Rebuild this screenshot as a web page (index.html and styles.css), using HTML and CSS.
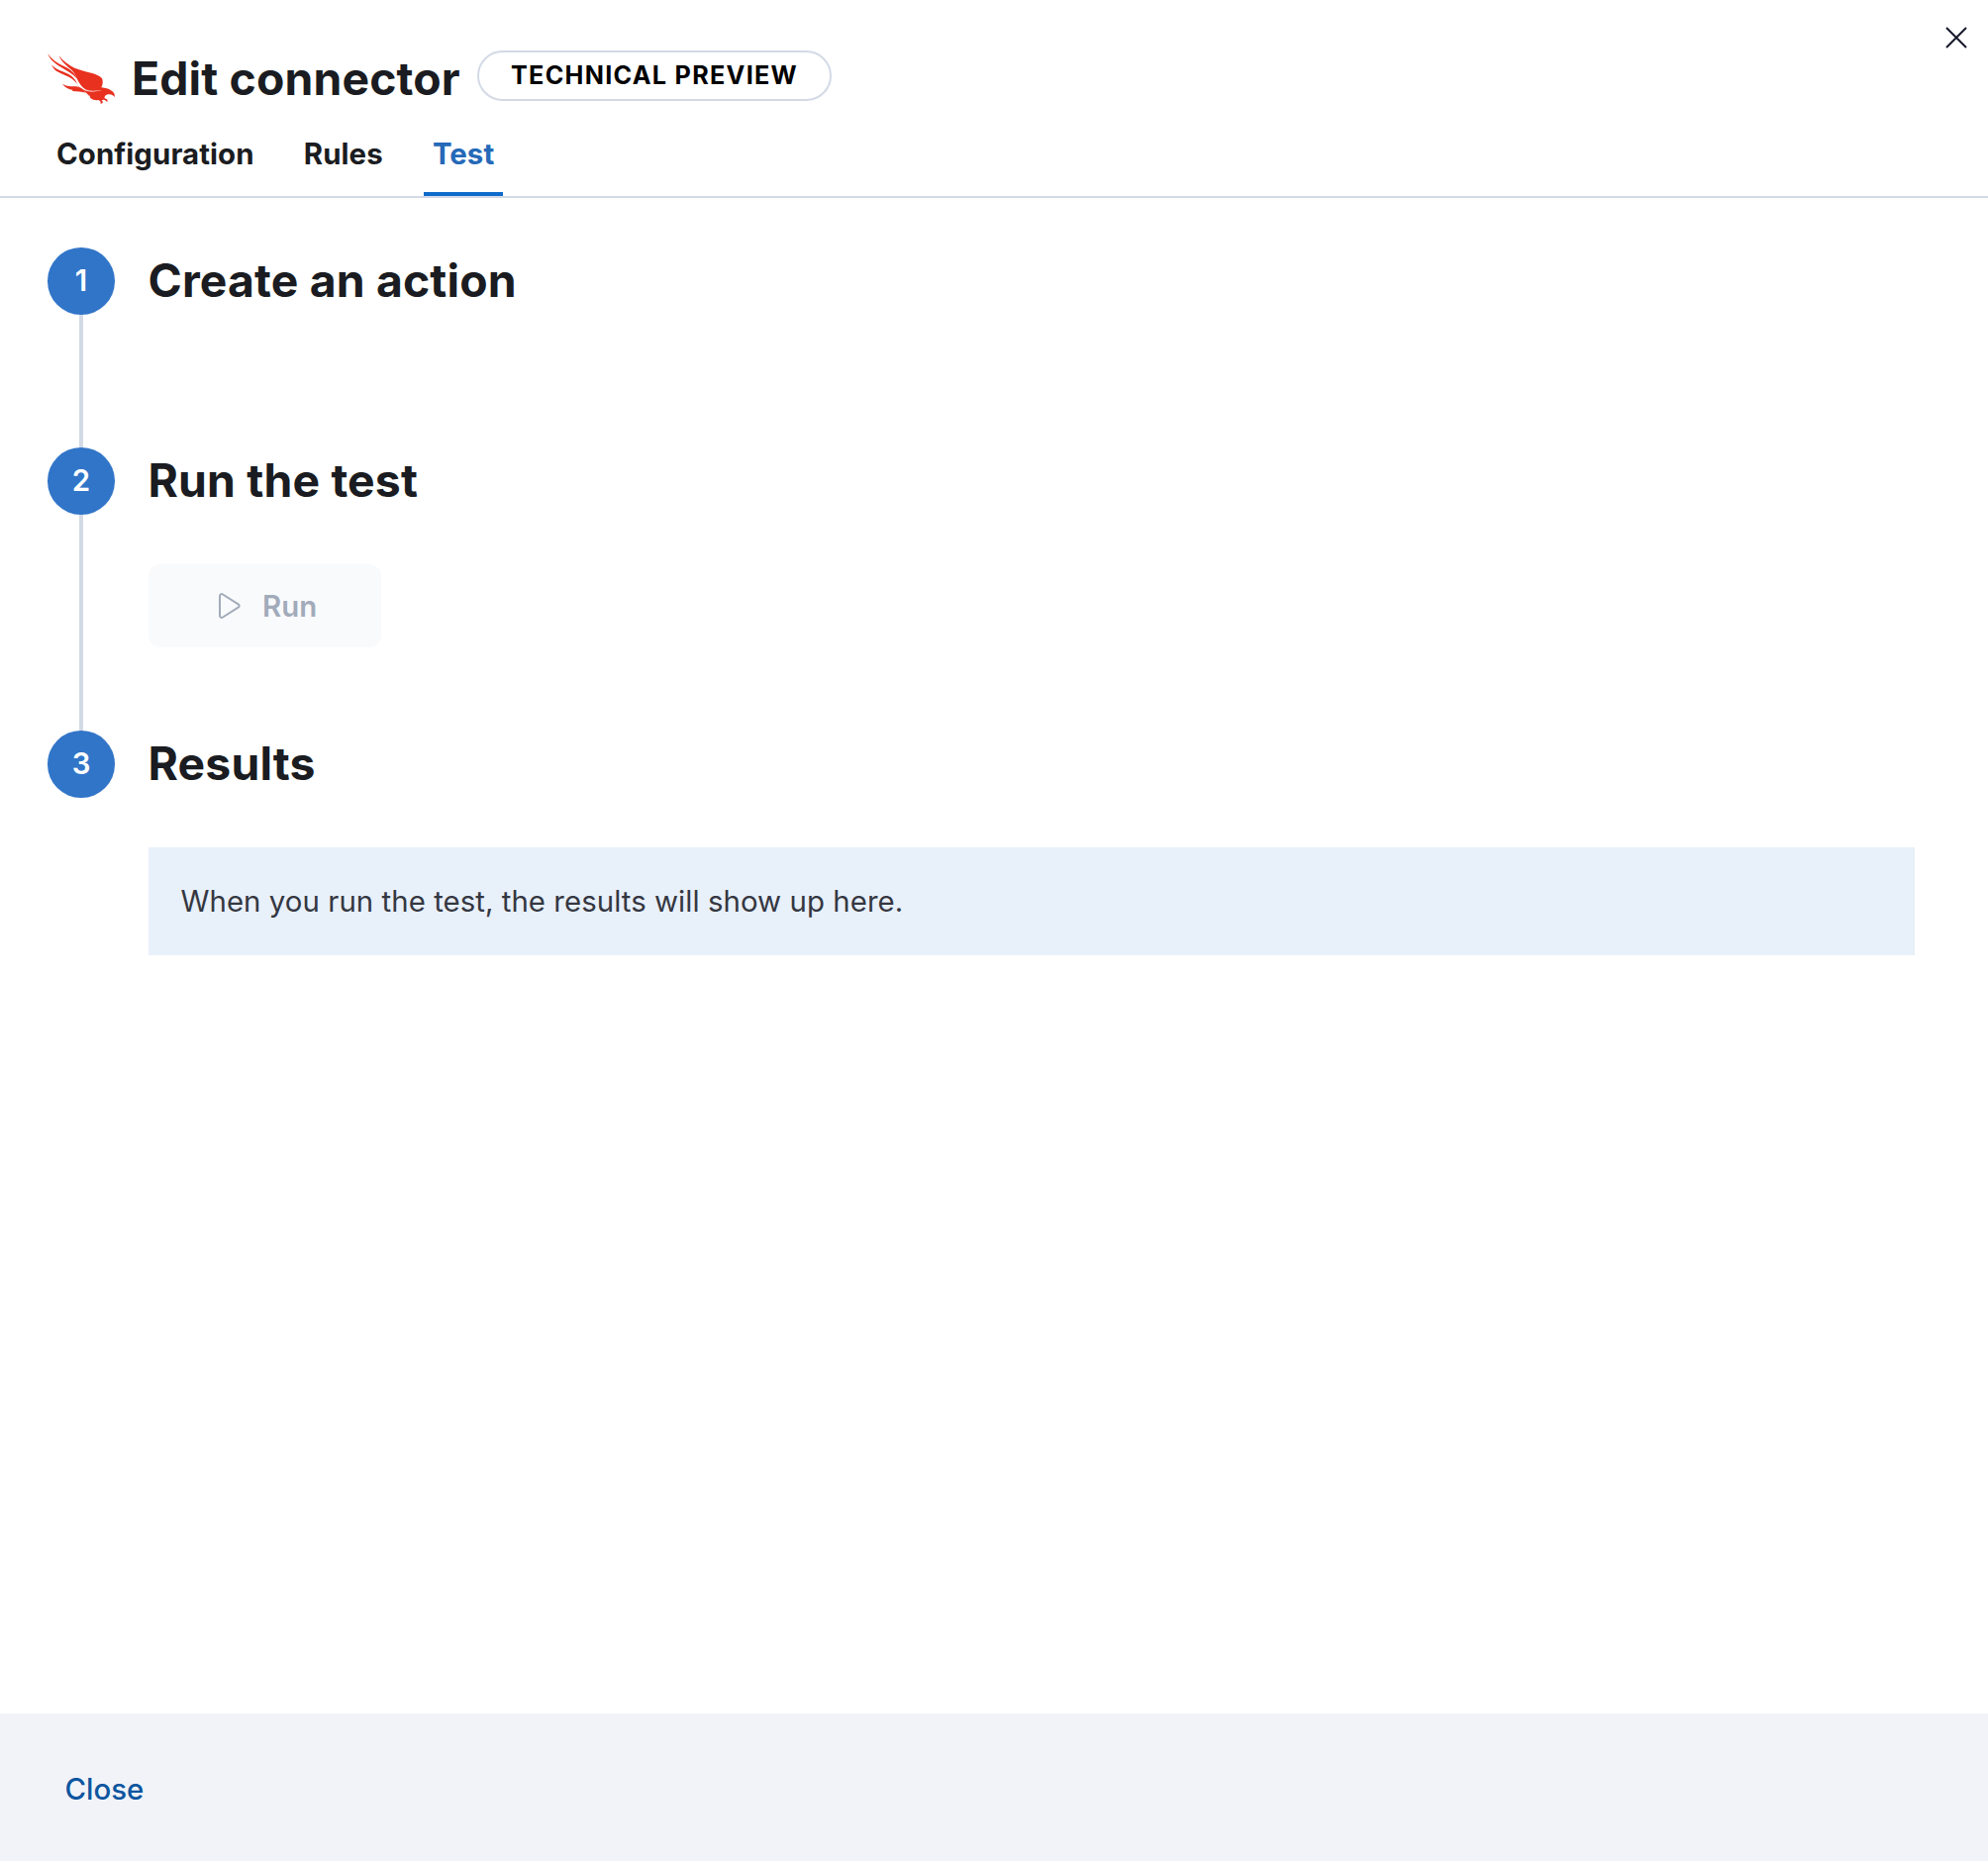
FILE: index.html
```html
<!DOCTYPE html>
<html lang="en">
<head>
<meta charset="utf-8">
<title>Edit connector</title>
<link rel="stylesheet" href="styles.css">
</head>
<body>
<div class="flyout">
  <header class="header">
    <div class="title-row">
      <svg class="logo" viewBox="24 36 204 168" aria-hidden="true">
        <g fill="#e8311f">
          <path d="M59 49C63 62 76 75 91 87C102 96 109 106 113 118C119 131 127 143 139 153C147 160 151 167 154 177C161 183 171 185 178 183C184 186 187 191 184 194C193 195 193 188 188 184C194 180 201 184 204 189C208 186 206 180 197 178C195 171 202 167 209 166C217 165 222 168 227 174C229 165 224 158 218 155C213 150 205 147 196 146L187 145C191 137 193 126 189 118C183 110 172 106 160 102C144 97 123 93 106 86C88 77 70 65 59 49Z"/>
          <path d="M25 42C30 60 45 71 62 82C82 94 100 104 114 119C106 99 91 90 76 82C55 72 36 61 25 42Z"/>
          <path d="M36 76C42 94 59 101 77 108C94 115 105 123 115 135C107 117 96 108 82 102C64 94 46 89 36 76Z"/>
          <path d="M69 134C77 145 88 150 101 153L98 156C112 157 127 157 140 161C130 150 122 144 110 142C96 141 81 142 69 134Z"/>
          <path d="M112 137C125 150 139 156 150 170L156 164C140 155 126 148 112 137Z"/>
        </g>
        <path d="M114 127C124 143 136 151 149 154C162 157 177 153 188 156C176 155 162 160 148 157C132 153 122 143 114 127Z" fill="#fff" opacity=".75"/>
      </svg>
      <h1 class="title">Edit connector</h1>
      <span class="badge">TECHNICAL PREVIEW</span>
    </div>
    <nav class="tabs">
      <a class="tab">Configuration</a>
      <a class="tab">Rules</a>
      <a class="tab selected">Test</a>
    </nav>
    <button class="dismiss" aria-label="Close dialog">
      <svg viewBox="0 0 24 24"><path d="M2 2L22 22M22 2L2 22" fill="none" stroke="#16182b" stroke-width="2"/></svg>
    </button>
  </header>
  <main class="steps">
    <section class="step step-create">
      <div class="rail"><span class="number">1</span></div>
      <div class="content"><h2 class="heading">Create an action</h2></div>
    </section>
    <section class="step step-run">
      <div class="rail"><span class="number">2</span></div>
      <div class="content">
        <h2 class="heading">Run the test</h2>
        <button class="run" disabled>
          <svg class="play" viewBox="0 0 22 26"><path d="M1 3.2V22.8C1 24.6 2.6 25.4 4.1 24.5L19.6 14.7C21 13.8 21 12.2 19.6 11.3L4.1 1.5C2.6 .6 1 1.4 1 3.2Z" fill="none" stroke="#a2abba" stroke-width="2"/></svg>
          <span class="run-label">Run</span>
        </button>
      </div>
    </section>
    <section class="step">
      <div class="rail"><span class="number">3</span></div>
      <div class="content">
        <h2 class="heading">Results</h2>
        <div class="callout"><span class="callout-text">When you run the test, the results will show up here.</span></div>
      </div>
    </section>
  </main>
  <footer class="footer"><a class="close">Close</a></footer>
</div>
</body>
</html>
```
FILE: styles.css
```css
* { box-sizing: border-box; }
body { margin: 0; background: #fff; color: #1a1c21; font-family: Inter, "Liberation Sans", sans-serif; font-size: 29.4px; }
h1, h2 { margin: 0; }
button { border: 0; padding: 0; font: inherit; }
svg { display: block; }

.flyout { display: flex; flex-direction: column; height: 1880px; }

.header { position: relative; height: 200px; padding: 51px 48px 0; border-bottom: 2px solid #d3dae6; display: flex; flex-direction: column; flex: none; }
.title-row { display: flex; align-items: flex-start; height: 78px; }
.logo { width: 68px; height: 56px; margin-top: 1px; }
.title { margin-left: 17px; width: 349px; line-height: 57px; font-size: 46.3px; font-weight: 700; letter-spacing: .15px; white-space: nowrap; }
.badge { width: 358px; height: 51px; border: 2px solid #d3dae6; border-radius: 26px; padding-left: 32px; line-height: 47px; font-size: 25.2px; font-weight: 700; letter-spacing: 1.28px; color: #000; white-space: nowrap; }
.tabs { display: flex; gap: 33.2px; height: 69px; }
.tab { height: 69px; padding: 0 8px 0 9px; line-height: 54px; font-weight: 700; letter-spacing: .08px; white-space: nowrap; }
.selected { width: 80px; color: #2569b8; border-bottom: 4px solid #0f6bcb; }
.dismiss { position: absolute; top: 26px; right: 20px; width: 24px; height: 24px; background: none; }

.steps { flex: 1; padding: 50px 74px 0 48px; }
.step { display: flex; gap: 33.5px; }
.step-create { height: 202px; }
.step-run { height: 286px; }
.rail { width: 68px; flex: none; display: flex; flex-direction: column; align-items: center; }
.number { width: 67.5px; height: 67.5px; border-radius: 50%; background: #3175c8; color: #fff; font-weight: 600; line-height: 68px; text-align: center; flex: none; }
.step-create .rail::after, .step-run .rail::after { content: ""; width: 4px; flex: 1; background: #d3dae6; }
.content { flex: 1; }
.heading { height: 68px; line-height: 67px; font-size: 46.3px; font-weight: 700; letter-spacing: .18px; white-space: nowrap; }
.run { display: flex; align-items: center; width: 235px; height: 84px; margin-top: 50px; padding-left: 71px; gap: 22.5px; border-radius: 12px; background: #f9fafc; color: #a2abba; font-weight: 600; }
.play { width: 22px; height: 26px; }
.callout { height: 109px; margin-top: 50px; padding-left: 33px; background: #e8f0fa; color: #343741; line-height: 110px; letter-spacing: .05px; }

.footer { height: 149px; padding-left: 65.5px; background: #f2f3f9; line-height: 153px; flex: none; }
.close { color: #0c559f; font-weight: 500; }
```
